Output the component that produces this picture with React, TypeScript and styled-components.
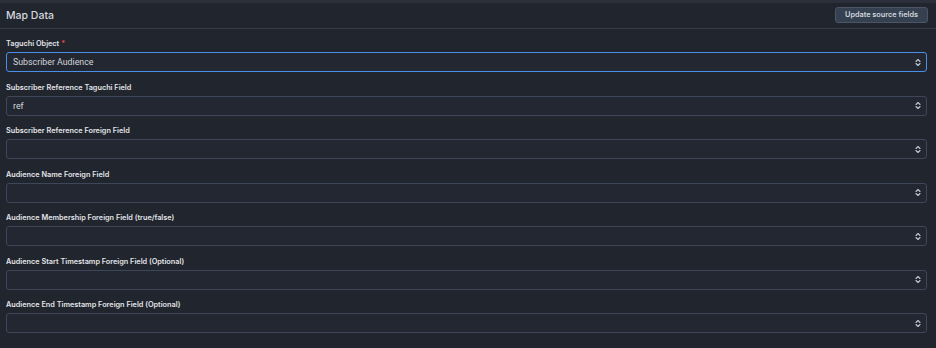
import * as React from "react";
import styled, { createGlobalStyle } from "styled-components";

const GlobalStyle = createGlobalStyle`
  html, body {
    margin: 0;
    padding: 0;
    background: #21252e;
  }
  body {
    font-family: Inter, "Noto Sans", sans-serif;
    -webkit-font-smoothing: antialiased;
  }
`;

const Panel = styled.div`
  width: 936px;
  height: 348px;
  background: #21252e;
  border-top: 3px solid #2b303a;
  box-sizing: border-box;
  overflow: hidden;
`;

const Header = styled.div`
  display: flex;
  align-items: center;
  justify-content: space-between;
  height: 25px;
  padding: 0 8px 0 6px;
  border-bottom: 1px solid #343a46;
`;

const Title = styled.h2`
  margin: 0;
  font-size: 10.5px;
  font-weight: 500;
  color: #d5d8dd;
`;

const UpdateButton = styled.button`
  height: 16px;
  padding: 0 9px;
  background: #354051;
  border: 1px solid #4b5566;
  border-radius: 3px;
  color: #d2d6dc;
  font-family: Inter, "Noto Sans", sans-serif;
  font-size: 7.3px;
  font-weight: 600;
  line-height: 1;
  margin-top: -1px;
`;

const Form = styled.div`
  display: flex;
  flex-direction: column;
  gap: 9.5px;
  padding: 9px 9px 0 6px;
`;

const Field = styled.div`
  display: flex;
  flex-direction: column;
  gap: 2px;
`;

const Label = styled.label`
  font-size: 7.3px;
  font-weight: 600;
  line-height: 12px;
  color: #e2e4e8;
`;

const Required = styled.span`
  color: #e5484d;
  margin-left: 2px;
`;

const SelectBox = styled.div<{ $focused?: boolean }>`
  display: flex;
  align-items: center;
  justify-content: space-between;
  height: 20px;
  box-sizing: border-box;
  padding: 0 5px 0 6px;
  background: #232731;
  border: 1px solid ${(p) => (p.$focused ? "#4a8fe7" : "#3d4759")};
  border-radius: 3px;
`;

const Value = styled.span`
  font-family: Roboto, "Noto Sans", sans-serif;
  font-size: 8.8px;
  color: #d3d6db;
`;

const Chevron = () => (
  <svg width="6" height="9" viewBox="0 0 6 9" fill="none">
    <path
      d="M1 3.5 L3 1.5 L5 3.5 M1 5.5 L3 7.5 L5 5.5"
      stroke="#c3c7ce"
      strokeWidth="1.1"
      strokeLinecap="round"
      strokeLinejoin="round"
    />
  </svg>
);

const fields = [
  { label: "Taguchi Object", value: "Subscriber Audience", required: true, focused: true },
  { label: "Subscriber Reference Taguchi Field", value: "ref" },
  { label: "Subscriber Reference Foreign Field", value: "" },
  { label: "Audience Name Foreign Field", value: "" },
  { label: "Audience Membership Foreign Field (true/false)", value: "" },
  { label: "Audience Start Timestamp Foreign Field (Optional)", value: "" },
  { label: "Audience End Timestamp Foreign Field (Optional)", value: "" },
];

export default function App() {
  return (
    <>
      <GlobalStyle />
      <Panel>
        <Header>
          <Title>Map Data</Title>
          <UpdateButton>Update source fields</UpdateButton>
        </Header>
        <Form>
          {fields.map((f) => (
            <Field key={f.label}>
              <Label>
                {f.label}
                {f.required && <Required>*</Required>}
              </Label>
              <SelectBox $focused={f.focused}>
                <Value>{f.value}</Value>
                <Chevron />
              </SelectBox>
            </Field>
          ))}
        </Form>
      </Panel>
    </>
  );
}
